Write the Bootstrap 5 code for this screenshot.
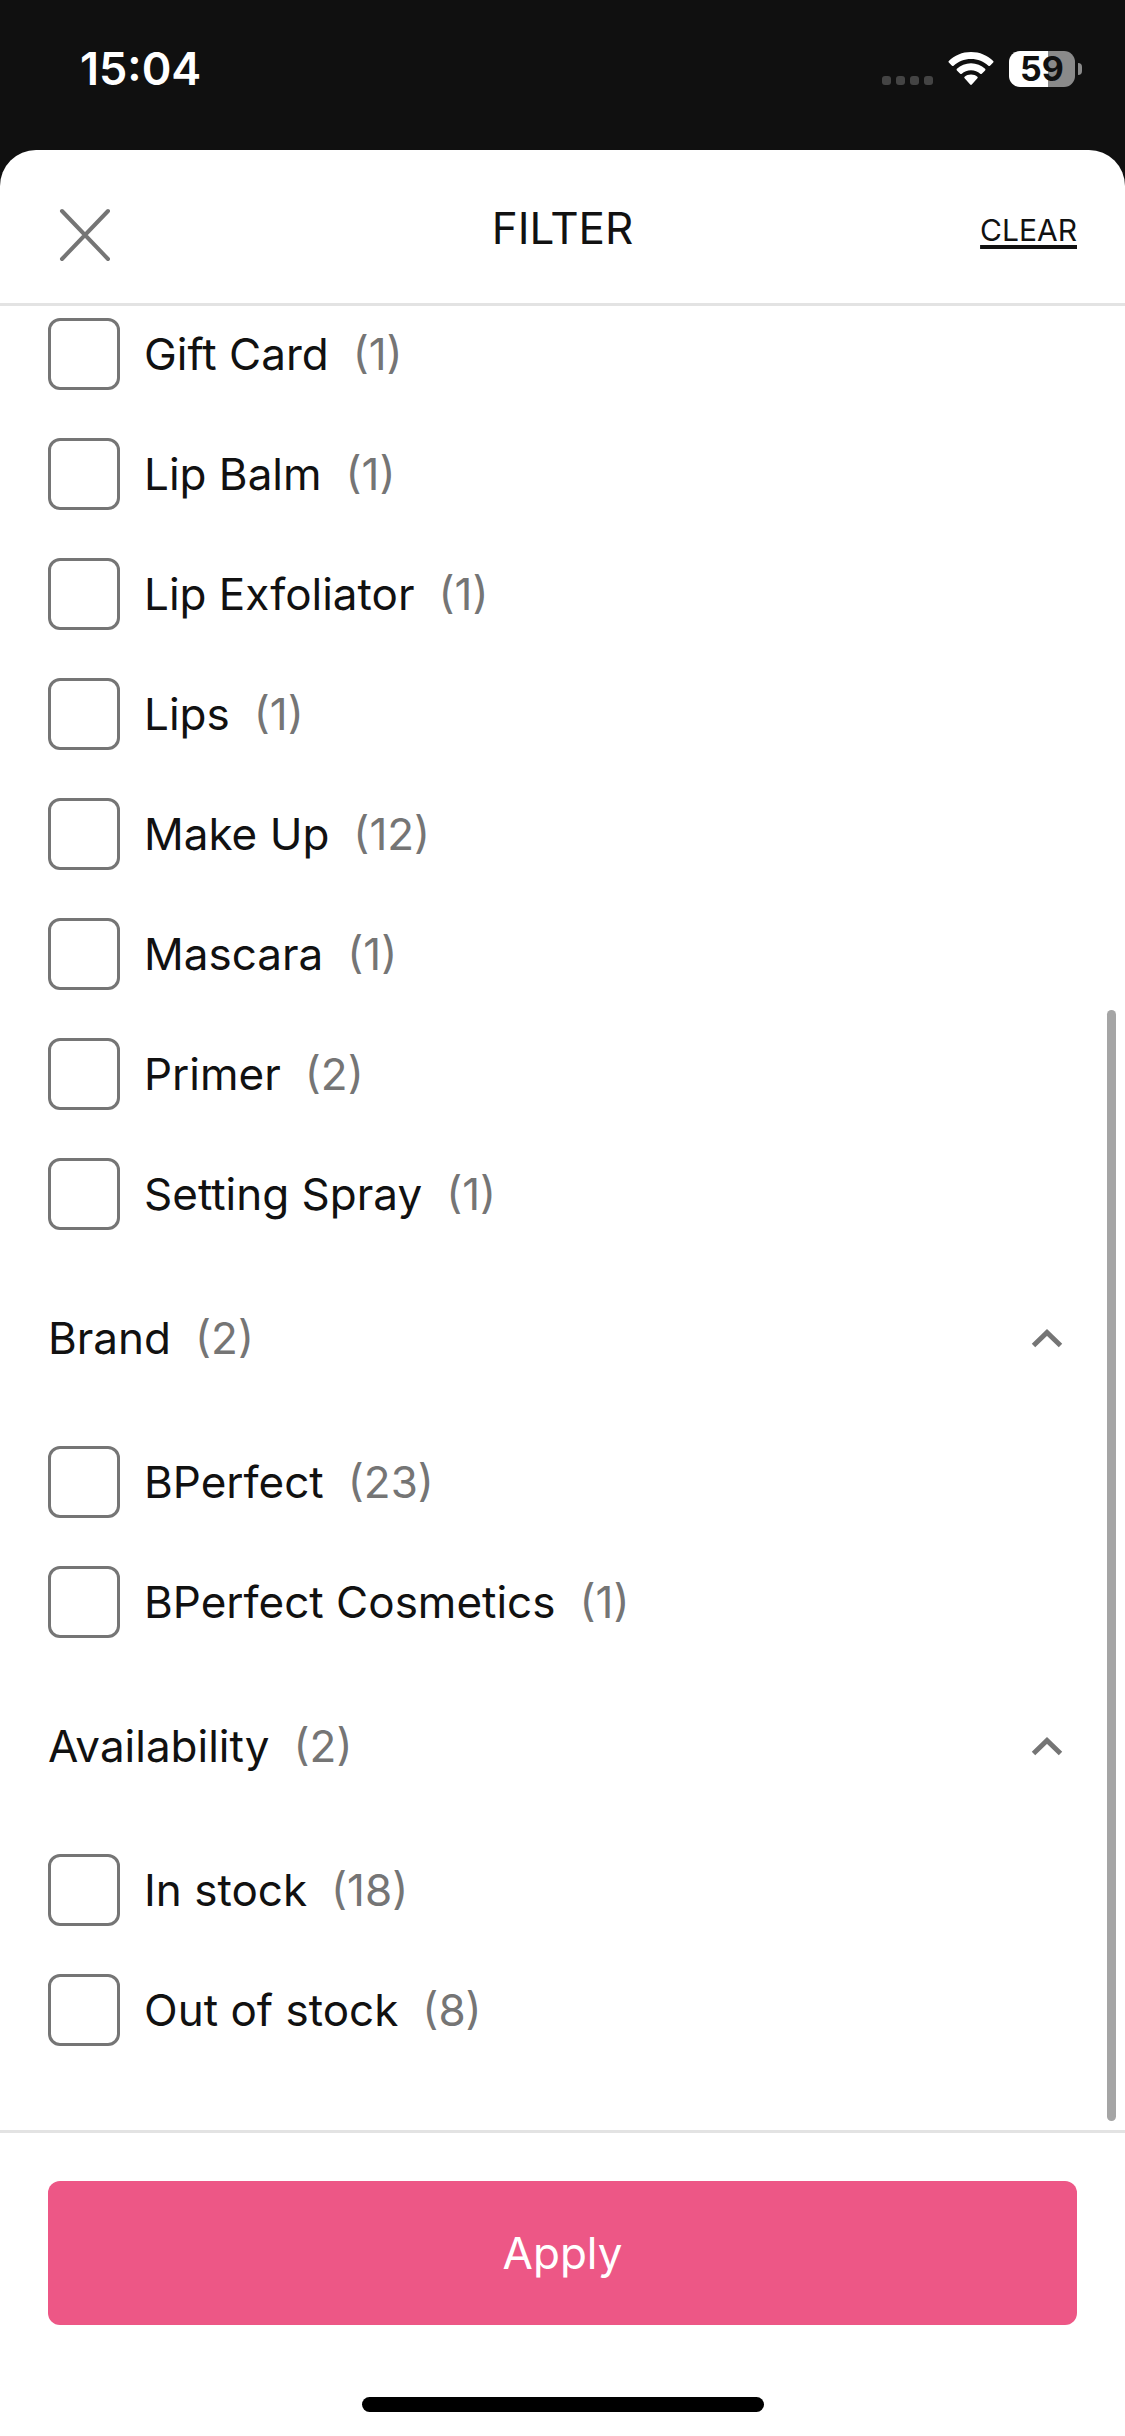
<!DOCTYPE html>
<html lang="en">
<head>
<meta charset="utf-8">
<meta name="viewport" content="width=device-width, initial-scale=1">
<title>Filter</title>
<link href="https://cdn.jsdelivr.net/npm/bootstrap@5.3.0/dist/css/bootstrap.min.css" rel="stylesheet">
<style>
  body { font-family: Inter, "Liberation Sans", sans-serif; font-size: 44px; line-height: 60px; color: #111; background: #101010; }
  .status-bar { height: 150px; padding: 0 43px 12px 80px; color: #fff; }
  .status-time { font-weight: 600; font-size: 45px; }
  .status-icons { gap: 15px; }
  .signal { gap: 5px; padding-top: 23px; }
  .signal i { width: 9px; height: 9px; border-radius: 3px; background: #444; }
  .battery-body { width: 66px; height: 36px; border-radius: 11px; background: linear-gradient(90deg, #fff 59%, #8a8a8a 59%); color: #101010; font-size: 34px; font-weight: 700; line-height: 36px; }
  .battery-tip { width: 4px; height: 12px; margin-left: 3px; border-radius: 0 6px 6px 0; background: #8a8a8a; }
  .sheet { background: #fff; border-radius: 36px 36px 0 0; }
  .sheet-head { height: 156px; padding: 2px 48px 0; border-bottom: 3px solid #e3e3e3; }
  .sheet-head > * { flex: 1 1 0; }
  .close-btn { padding: 14px 0 0 10px; line-height: 1; }
  .close-btn svg { display: block; }
  .clear-link { color: #111; font-size: 30px; text-decoration: underline; text-decoration-thickness: 4px; text-underline-offset: 4px; text-decoration-skip-ink: none; }
  .head-action { line-height: 56px; }
  .options { gap: 48px; }
  .option { gap: 24px; height: 72px; padding: 0; margin: 0; }
  .option .form-check-input { width: 72px; height: 72px; margin: 0; float: none; border: 3px solid #757575; border-radius: 12px; background-color: #fff; }
  .tally { color: #757575; margin-left: 24px; }
  .filters { padding: 12px 48px 84px; }
  .group-toggle { height: 216px; color: #111; font-size: 44px; padding: 0 12px 0 0; line-height: 60px; }
  .scroll-thumb { width: 9px; border-radius: 5px; background: #a5a5a5; top: 704px; right: 9px; bottom: 9px; }
  .sheet-foot { border-top: 3px solid #e3e3e3; padding: 48px 48px 24px; }
  .apply-btn { height: 144px; border-radius: 12px; font-size: 44px; --bs-btn-bg: #ed5786; --bs-btn-color: #fff; --bs-btn-hover-bg: #df4778; --bs-btn-hover-color: #fff; --bs-btn-border-width: 0; }
  .home-bar { width: 402px; height: 15px; margin-top: 72px; border-radius: 8px; background: #000; }
</style>
</head>
<body>
<div class="d-flex flex-column min-vh-100">
  <div class="status-bar d-flex align-items-center justify-content-between">
    <span class="status-time">15:04</span>
    <div class="status-icons d-flex align-items-center">
      <span class="signal d-flex"><i></i><i></i><i></i><i></i></span>
      <svg width="46" height="34" viewBox="0 0 46 34" fill="#fff" aria-label="Wi-Fi">
        <path d="M23 0C14.300 0 6.400 3.400 .8 8.900Q0 9.700.8 10.500L4 13.700Q4.800 14.400 5.600 13.700C10.100 9.500 16.200 7 23 7S35.900 9.500 40.400 13.700Q41.200 14.400 42 13.700L45.200 10.500Q46 9.700 45.200 8.900C39.600 3.400 31.700 0 23 0Z"/>
        <path d="M23 11.300C17.600 11.300 12.600 13.400 8.900 16.800Q8.100 17.600 8.900 18.400L12.200 21.700Q13 22.400 13.800 21.700C16.200 19.500 19.400 18.200 23 18.200S29.800 19.500 32.200 21.700Q33 22.400 33.800 21.700L37.100 18.400Q37.900 17.600 37.100 16.800C33.400 13.400 28.400 11.300 23 11.300Z"/>
        <path d="M23 22.500C20.500 22.500 18.300 23.300 16.600 24.700Q15.800 25.500 16.600 26.300L22.200 32.600Q23 33.400 23.800 32.600L29.400 26.300Q30.200 25.500 29.400 24.700C27.700 23.300 25.500 22.500 23 22.500Z"/>
      </svg>
      <span class="d-flex align-items-center"><span class="battery-body text-center">59</span><span class="battery-tip"></span></span>
    </div>
  </div>

  <main class="sheet d-flex flex-column flex-grow-1">
    <header class="sheet-head d-flex align-items-center">
      <div><button type="button" class="close-btn btn border-0" aria-label="Close">
        <svg width="54" height="54" viewBox="0 0 54 54" fill="none" stroke="#757575" stroke-width="4" stroke-linecap="round"><path d="M4 3L50 51M50 3L4 51"/></svg>
      </button></div>
      <div class="text-center">FILTER</div>
      <div class="head-action text-end"><a href="#" class="clear-link">CLEAR</a></div>
    </header>

    <form id="filters" class="filters position-relative flex-grow-1">
      <div class="options d-flex flex-column">
        <div class="form-check option d-flex align-items-center"><input class="form-check-input" type="checkbox" id="t1"><label for="t1">Gift Card<span class="tally">(1)</span></label></div>
        <div class="form-check option d-flex align-items-center"><input class="form-check-input" type="checkbox" id="t2"><label for="t2">Lip Balm<span class="tally">(1)</span></label></div>
        <div class="form-check option d-flex align-items-center"><input class="form-check-input" type="checkbox" id="t3"><label for="t3">Lip Exfoliator<span class="tally">(1)</span></label></div>
        <div class="form-check option d-flex align-items-center"><input class="form-check-input" type="checkbox" id="t4"><label for="t4">Lips<span class="tally">(1)</span></label></div>
        <div class="form-check option d-flex align-items-center"><input class="form-check-input" type="checkbox" id="t5"><label for="t5">Make Up<span class="tally">(12)</span></label></div>
        <div class="form-check option d-flex align-items-center"><input class="form-check-input" type="checkbox" id="t6"><label for="t6">Mascara<span class="tally">(1)</span></label></div>
        <div class="form-check option d-flex align-items-center"><input class="form-check-input" type="checkbox" id="t7"><label for="t7">Primer<span class="tally">(2)</span></label></div>
        <div class="form-check option d-flex align-items-center"><input class="form-check-input" type="checkbox" id="t8"><label for="t8">Setting Spray<span class="tally">(1)</span></label></div>
      </div>

      <button type="button" class="group-toggle btn border-0 w-100 d-flex align-items-center justify-content-between" data-bs-toggle="collapse" data-bs-target="#brand" aria-expanded="true" aria-controls="brand">
        <span>Brand<span class="tally">(2)</span></span>
        <svg width="36" height="24" viewBox="0 0 36 24" fill="none" stroke="#757575" stroke-width="5"><path d="M4.500 19.500L18 6.500L31.500 19.500"/></svg>
      </button>
      <div id="brand" class="collapse show">
        <div class="options d-flex flex-column">
          <div class="form-check option d-flex align-items-center"><input class="form-check-input" type="checkbox" id="b1"><label for="b1">BPerfect<span class="tally">(23)</span></label></div>
          <div class="form-check option d-flex align-items-center"><input class="form-check-input" type="checkbox" id="b2"><label for="b2">BPerfect Cosmetics<span class="tally">(1)</span></label></div>
        </div>
      </div>

      <button type="button" class="group-toggle btn border-0 w-100 d-flex align-items-center justify-content-between" data-bs-toggle="collapse" data-bs-target="#availability" aria-expanded="true" aria-controls="availability">
        <span>Availability<span class="tally">(2)</span></span>
        <svg width="36" height="24" viewBox="0 0 36 24" fill="none" stroke="#757575" stroke-width="5"><path d="M4.500 19.500L18 6.500L31.500 19.500"/></svg>
      </button>
      <div id="availability" class="collapse show">
        <div class="options d-flex flex-column">
          <div class="form-check option d-flex align-items-center"><input class="form-check-input" type="checkbox" id="a1"><label for="a1">In stock<span class="tally">(18)</span></label></div>
          <div class="form-check option d-flex align-items-center"><input class="form-check-input" type="checkbox" id="a2"><label for="a2">Out of stock<span class="tally">(8)</span></label></div>
        </div>
      </div>
      <div class="scroll-thumb position-absolute"></div>
    </form>

    <footer class="sheet-foot">
      <button type="submit" form="filters" class="apply-btn btn w-100">Apply</button>
      <div class="home-bar mx-auto"></div>
    </footer>
  </main>
</div>
<script src="https://cdn.jsdelivr.net/npm/bootstrap@5.3.0/dist/js/bootstrap.bundle.min.js"></script>
</body>
</html>
